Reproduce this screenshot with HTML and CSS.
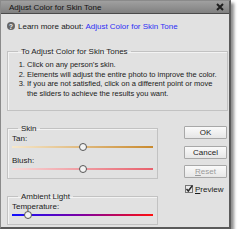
FILE: index.html
```html
<!DOCTYPE html>
<html lang="en">
<head>
    <meta charset="UTF-8">
    <title>Adjust Color for Skin Tone</title>
    <link rel="stylesheet" href="styles.css">
</head>
<body>
    <div class="dialog">
        <div class="titlebar">
            <span class="title">Adjust Color for Skin Tone</span>
            <svg class="close" width="8" height="8" viewBox="0 0 8 8">
                <path d="M1 1 L7 7 M7 1 L1 7" stroke="#1e1e1e" stroke-width="2"/>
            </svg>
        </div>

        <div class="help">
            <span class="help-icon">?</span>
            <span>Learn more about:</span>
            <a href="#">Adjust Color for Skin Tone</a>
        </div>

        <fieldset class="box steps">
            <legend>To Adjust Color for Skin Tones</legend>
            <ol>
                <li>Click on any person’s skin.</li>
                <li>Elements will adjust the entire photo to improve the color.</li>
                <li>If you are not satisfied, click on a different point or move the sliders to achieve the results you want.</li>
            </ol>
        </fieldset>

        <div class="lower">
            <div class="controls">
                <fieldset class="box skin">
                    <legend>Skin</legend>
                    <div class="label">Tan:</div>
                    <div class="slider tan"><span class="thumb" style="left: 50%"></span></div>
                    <div class="label">Blush:</div>
                    <div class="slider blush"><span class="thumb" style="left: 50%"></span></div>
                </fieldset>
                <fieldset class="box ambient">
                    <legend>Ambient Light</legend>
                    <div class="label">Temperature:</div>
                    <div class="slider temp"><span class="thumb" style="left: 11%"></span></div>
                </fieldset>
            </div>

            <div class="buttons">
                <button class="btn">OK</button>
                <button class="btn">Cancel</button>
                <button class="btn disabled"><u>R</u>eset</button>
                <label class="preview">
                    <svg class="check" width="8" height="8" viewBox="0 0 8 8">
                        <rect x="0.5" y="0.5" width="7" height="7" fill="#e9e9e9" stroke="#777"/>
                        <path d="M1.5 4 L3.3 6 L7.5 0.5" fill="none" stroke="#2a2a2a" stroke-width="1.5"/>
                    </svg>
                    <span><u>P</u>review</span>
                </label>
            </div>
        </div>
    </div>
</body>
</html>
```

FILE: styles.css
```css
body {
    margin: 0;
    background: #fff;
    font-family: 'Liberation Sans', Arial, sans-serif;
    font-size: 8px;
    color: #1a1a1a;
}

.dialog {
    width: 231px;
    height: 229px;
    background: #e1e1e1;
    border: 1px solid #8a8a8a;
    border-right: 2px solid #5a5a5a;
    border-bottom: 2px solid #5a5a5a;
    box-shadow: 3px 3px 3px rgba(0, 0, 0, 0.45);
    box-sizing: border-box;
}

.titlebar {
    height: 12px;
    background: linear-gradient(#a0a0a0, #808080);
    border-bottom: 1px solid #4a4a4a;
    display: grid;
    grid-template-columns: 1fr 8px;
    align-items: center;
    padding: 0 5px 0 8px;
}

.title {
    font-size: 8px;
    color: #111;
}

.close {
    display: block;
}

.help {
    display: flex;
    align-items: center;
    gap: 2px;
    margin: 7px 0 0 6px;
    height: 10px;
    font-size: 8px;
}

.help-icon {
    width: 8px;
    height: 8px;
    border-radius: 50%;
    background: #666;
    color: #eee;
    font-size: 7px;
    font-weight: bold;
    display: flex;
    align-items: center;
    justify-content: center;
    margin-right: 1px;
}

.help a {
    color: #2f2ff5;
    text-decoration: none;
}

.box {
    margin: 0;
    border: 1px solid #c2c2c2;
    box-shadow: inset 1px 1px 0 #f3f3f3;
    padding: 0 4px;
}

.box legend {
    padding: 0 3px;
    margin-left: 6px;
    font-size: 8px;
    color: #222;
}

.steps {
    margin: 16px 0 0 6px;
    width: 221px;
    height: 64px;
    box-sizing: border-box;
}

.steps ol {
    margin: 4px 0 0 0;
    padding-left: 15px;
    font-size: 7.5px;
    line-height: 9.5px;
}

.lower {
    display: flex;
    margin-top: 13px;
}

.controls {
    display: flex;
    flex-direction: column;
    gap: 13px;
    margin-left: 6px;
    width: 151px;
}

.skin {
    height: 55px;
    box-sizing: border-box;
}

.ambient {
    height: 33px;
    box-sizing: border-box;
}

.label {
    font-size: 8px;
    margin-top: 1px;
    height: 10px;
}

.slider {
    position: relative;
    height: 2px;
    margin: 2px 0 8px 0;
}

.tan { background: linear-gradient(to right, #f6e8cc, #c98a2e); }
.blush { background: linear-gradient(to right, #f8d8d8, #e8606c); }
.temp { background: linear-gradient(to right, #1010ff, #8000a0, #ff1010); }

.thumb {
    position: absolute;
    top: -3px;
    width: 8px;
    height: 8px;
    margin-left: -4px;
    border-radius: 50%;
    border: 1px solid #555;
    background: #f2f2f2;
    box-sizing: border-box;
}

.buttons {
    display: flex;
    flex-direction: column;
    gap: 6.5px;
    margin-left: 26px;
    margin-top: 2px;
}

.btn {
    width: 43px;
    height: 13px;
    padding: 0;
    font-family: inherit;
    font-size: 8px;
    color: #222;
    background: linear-gradient(#fafafa, #e6e6e6);
    border: 1px solid #a8a8a8;
    border-radius: 1px;
}

.btn.disabled {
    color: #999;
}

.preview {
    display: flex;
    align-items: center;
    gap: 2px;
    margin-left: 1px;
    font-size: 8px;
    height: 9px;
}

.check {
    display: block;
}
```
